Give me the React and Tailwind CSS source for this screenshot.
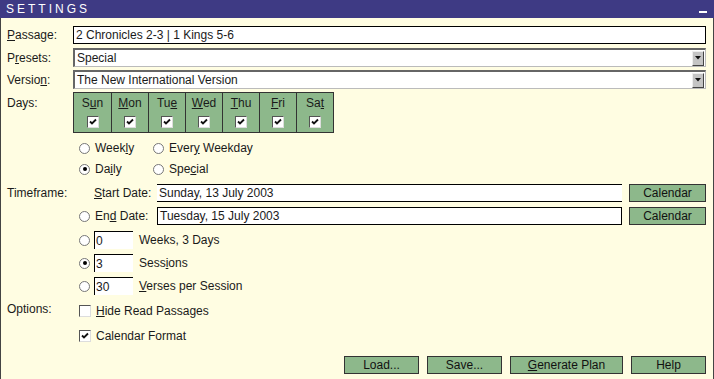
import React from "react";

const U = ({ children }) => <span className="underline">{children}</span>;

function Check({ on = true }) {
	return (
		<span className="inline-flex w-[12px] h-[12px] bg-white border border-t-[#555] border-l-[#555] border-r-[#ddd] border-b-[#ddd] items-center justify-center">
			{on && (
				<svg width="8" height="8" viewBox="0 0 8 8">
					<path d="M1 3.5 L3 5.5 L7 1.5" stroke="#111" strokeWidth="1.8" fill="none" />
				</svg>
			)}
		</span>
	);
}

function Radio({ on = false }) {
	return (
		<span className="inline-flex w-[11px] h-[11px] rounded-full bg-white border border-[#777] items-center justify-center shrink-0">
			{on && <span className="w-[4px] h-[4px] rounded-full bg-black" />}
		</span>
	);
}

function Label({ children }) {
	return <div className="w-[72px] pl-[6px] shrink-0">{children}</div>;
}

function Select({ value }) {
	return (
		<div className="flex-1 flex items-center h-full bg-white border-t-2 border-l-2 border-t-[#666] border-l-[#666] border-b border-r border-b-[#bbb] border-r-[#bbb]">
			<span className="flex-1 pl-[2px]">{value}</span>
			<span className="w-[12px] h-[15px] mr-[1px] bg-[#c4c4c4] border border-t-[#eee] border-l-[#eee] border-b-[#444] border-r-[#444] flex items-center justify-center">
				<svg width="6" height="4" viewBox="0 0 6 4">
					<path d="M0 0 H6 L3 3.5 Z" fill="#111" />
				</svg>
			</span>
		</div>
	);
}

function GreenBtn({ children, w }) {
	return (
		<div className={`${w} h-[18px] bg-[#8db88b] border border-[#333] flex items-center justify-center text-[#111]`}>
			{children}
		</div>
	);
}

const days = [
	<>S<U>u</U>n</>,
	<><U>M</U>on</>,
	<>Tu<U>e</U></>,
	<><U>W</U>ed</>,
	<><U>T</U>hu</>,
	<><U>F</U>ri</>,
	<>Sa<U>t</U></>,
];

export default function App() {
	return (
		<div className="w-[714px] h-[379px] bg-[#fffde2] text-[12px] text-[#1a1a1a] flex flex-col" style={{ fontFamily: "'Liberation Sans', Arial, sans-serif" }}>
			<div className="h-[18px] bg-[#3e3a84] flex items-center justify-between pl-[6px] pr-[7px] shrink-0">
				<span className="text-white tracking-[3px] text-[12px]">SETTINGS</span>
				<span className="w-[8px] h-[2px] bg-white mt-[6px]" />
			</div>
			<div className="flex-1 flex flex-col border-x border-[#444] pr-[7px]">
				<div className="flex items-center h-[18px] mt-[8px]">
					<Label><U>P</U>assage:</Label>
					<div className="flex-1 h-full bg-white border border-black flex items-center pl-[2px]">2 Chronicles 2-3 | 1 Kings 5-6</div>
				</div>
				<div className="flex items-center h-[19px] mt-[4px]">
					<Label>P<U>r</U>esets:</Label>
					<Select value="Special" />
				</div>
				<div className="flex items-center h-[19px] mt-[3px]">
					<Label>Versio<U>n</U>:</Label>
					<Select value="The New International Version" />
				</div>
				<div className="flex mt-[3px]">
					<Label><div className="pt-[2px]">Days:</div></Label>
					<div className="flex border border-[#333] bg-[#8db88b] h-[41px]">
						{days.map((d, i) => (
							<div key={i} className={`w-[37px] flex flex-col items-center pt-[3px] ${i > 0 ? "border-l border-[#333]" : ""}`}>
								<span className="leading-[14px]">{d}</span>
								<span className="mt-[3px]"><Check /></span>
							</div>
						))}
					</div>
				</div>
				<div className="flex items-center h-[18px] mt-[6px] pl-[78px]">
					<div className="flex items-center gap-[5px] w-[74px]"><Radio /> <span>Week<U>l</U>y</span></div>
					<div className="flex items-center gap-[5px]"><Radio /> <span>Ever<U>y</U> Weekday</span></div>
				</div>
				<div className="flex items-center h-[18px] mt-[3px] pl-[78px]">
					<div className="flex items-center gap-[5px] w-[74px]"><Radio on /> <span>Da<U>i</U>ly</span></div>
					<div className="flex items-center gap-[5px]"><Radio /> <span>Spe<U>c</U>ial</span></div>
				</div>
				<div className="flex items-center h-[18px] mt-[6px]">
					<Label>Timeframe:</Label>
					<span className="w-[84px] pl-[21px]"><U>S</U>tart Date:</span>
					<div className="w-[465px] h-full bg-white border-y border-black flex items-center pl-[2px]">Sunday, 13 July 2003</div>
					<div className="ml-auto"><GreenBtn w="w-[77px]">Calendar</GreenBtn></div>
				</div>
				<div className="flex items-center h-[18px] mt-[5px]">
					<div className="w-[78px] shrink-0" />
					<div className="w-[78px] flex items-center gap-[5px]"><Radio /> <span>En<U>d</U> Date:</span></div>
					<div className="w-[465px] h-full bg-white border border-black flex items-center pl-[2px]">Tuesday, 15 July 2003</div>
					<div className="ml-auto"><GreenBtn w="w-[77px]">Calendar</GreenBtn></div>
				</div>
				{[
					["0", <>Weeks, 3 Days</>, false],
					["3", <>Sess<U>i</U>ons</>, true],
					["30", <><U>V</U>erses per Session</>, false],
				].map(([v, t, on], i) => (
					<div key={i} className={`flex items-center h-[18px] ${i === 0 ? "mt-[6px]" : "mt-[5px]"}`}>
						<div className="w-[78px] shrink-0" />
						<Radio on={on} />
						<div className="ml-[4px] w-[39px] h-full bg-white border-t border-l border-black flex items-center pl-[1px]">{v}</div>
						<span className="ml-[6px]">{t}</span>
					</div>
				))}
				<div className="flex items-center h-[18px] mt-[7px]">
					<Label><div className="-mt-[4px]">Options:</div></Label>
					<div className="ml-[6px] flex items-center gap-[5px]"><Check on={false} /> <span><U>H</U>ide Read Passages</span></div>
				</div>
				<div className="flex items-center h-[18px] mt-[7px]">
					<div className="w-[78px] shrink-0" />
					<div className="flex items-center gap-[5px]"><Check /> <span>Calendar Format</span></div>
				</div>
				<div className="flex items-center justify-end gap-[8px] mt-[11px]">
					<GreenBtn w="w-[75px]">Load...</GreenBtn>
					<GreenBtn w="w-[75px]">Save...</GreenBtn>
					<GreenBtn w="w-[113px]"><span><U>G</U>enerate Plan</span></GreenBtn>
					<GreenBtn w="w-[75px]">Help</GreenBtn>
				</div>
			</div>
		</div>
	);
}
